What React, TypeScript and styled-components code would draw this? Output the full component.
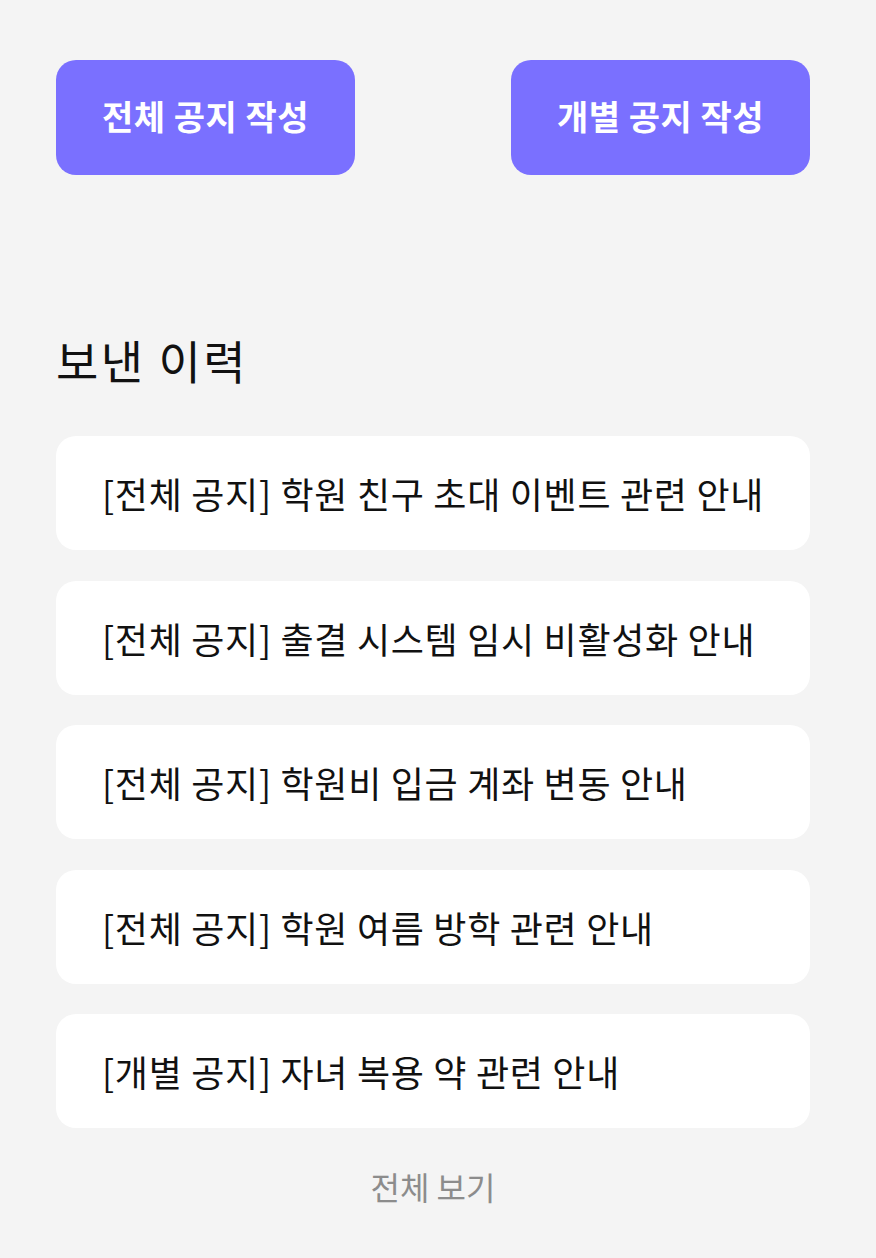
import React from "react";
import styled, { createGlobalStyle } from "styled-components";

const Global = createGlobalStyle`
  html, body {
    margin: 0;
    padding: 0;
    background: #f4f4f4;
  }
  body {
    font-family: "Noto Sans CJK KR", "Noto Sans", sans-serif;
    color: #111111;
  }
`;

const Page = styled.div`
  width: 754px;
  padding: 60px 66px 40px 56px;
  display: flex;
  flex-direction: column;
`;

const ButtonRow = styled.div`
  display: flex;
  justify-content: space-between;
`;

const ActionButton = styled.button`
  width: 299px;
  height: 115px;
  padding: 0 0 4px 0;
  border: none;
  border-radius: 20px;
  background: #7a70ff;
  color: #ffffff;
  font-family: inherit;
  font-size: 34px;
  font-weight: 700;
  letter-spacing: 0.5px;
  cursor: pointer;
`;

const Heading = styled.h2`
  margin: 153px 0 0 0;
  font-size: 46px;
  font-weight: 400;
  letter-spacing: 2.5px;
  line-height: 62px;
`;

const List = styled.ul`
  list-style: none;
  margin: 46px 0 0 0;
  padding: 0;
  display: flex;
  flex-direction: column;
  gap: 30.5px;
`;

const Card = styled.li`
  height: 114px;
  background: #ffffff;
  border-radius: 20px;
  display: flex;
  align-items: center;
  padding: 0 20px 0 46px;
  font-size: 36px;
  letter-spacing: 0.7px;
  white-space: nowrap;
`;

const More = styled.div`
  margin-top: 35px;
  text-align: center;
  font-size: 32px;
  color: #8c8c8c;
`;

const notices = [
  "[전체 공지] 학원 친구 초대 이벤트 관련 안내",
  "[전체 공지] 출결 시스템 임시 비활성화 안내",
  "[전체 공지] 학원비 입금 계좌 변동 안내",
  "[전체 공지] 학원 여름 방학 관련 안내",
  "[개별 공지] 자녀 복용 약 관련 안내",
];

export default function App() {
  return (
    <>
      <Global />
      <Page>
        <ButtonRow>
          <ActionButton>전체 공지 작성</ActionButton>
          <ActionButton>개별 공지 작성</ActionButton>
        </ButtonRow>
        <Heading>보낸 이력</Heading>
        <List>
          {notices.map((n) => (
            <Card key={n}>{n}</Card>
          ))}
        </List>
        <More>전체 보기</More>
      </Page>
    </>
  );
}
